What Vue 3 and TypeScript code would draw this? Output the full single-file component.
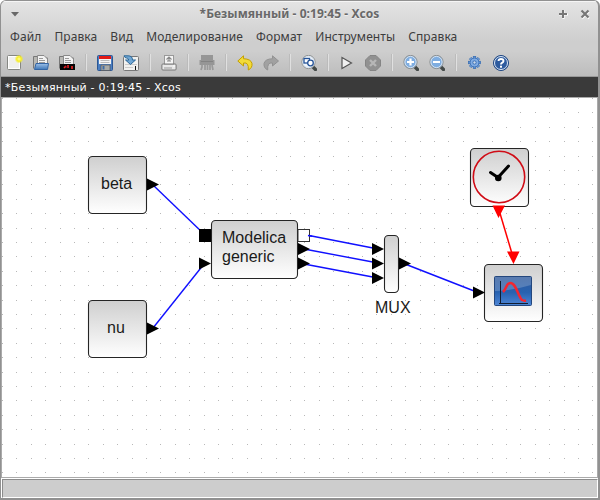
<script setup lang="ts">
interface Point { x: number; y: number }
interface Block { x: number; y: number; w: number; h: number }

const title = '*Безымянный - 0:19:45 - Xcos'
const menus: string[] = ['Файл', 'Правка', 'Вид', 'Моделирование', 'Формат', 'Инструменты', 'Справка']
const tools: string[] = [
  'new', 'open', 'recent', '|', 'save', 'export', '|', 'print', '|', 'delete', '|', 'undo', 'redo', '|',
  'fit', '|', 'play', 'stop', '|', 'zoomin', 'zoomout', '|', 'gear', 'help',
]

const dots: Point[] = []
for (let r = 0; r < 27; r++) {
  for (let c = 0; c < 42; c++) {
    dots.push({ x: Math.round(2 + c * 14.4), y: Math.round(98 + r * 14.4) })
  }
}

const blocks: Block[] = [
  { x: 88.5, y: 156.5, w: 58, h: 57 },
  { x: 88.5, y: 300.5, w: 58, h: 57 },
  { x: 211.5, y: 220.5, w: 86, h: 58 },
  { x: 384.5, y: 235.5, w: 14, h: 57 },
  { x: 470.5, y: 148.5, w: 58, h: 58 },
  { x: 484.5, y: 264.5, w: 58, h: 57 },
]

const links: string[] = [
  'M153 185L205 235', 'M153 328L204 264', 'M309 235.500L378 249', 'M304 249L378 263',
  'M304 264L378 278', 'M405 264L478 292.500',
]

const ports: Point[] = [
  { x: 147, y: 184.5 }, { x: 147, y: 328.5 }, { x: 199, y: 263.5 }, { x: 298, y: 249 }, { x: 298, y: 263.5 },
  { x: 372, y: 249 }, { x: 372, y: 263.5 }, { x: 372, y: 278 }, { x: 399, y: 263.5 }, { x: 473, y: 292.5 },
]
const teeth: number[] = [0, 45, 90, 135, 180, 225, 270, 315]
</script>

<template>
  <div class="window">
    <header class="titlebar">
      <svg class="menu-arrow" width="10" height="6"><path d="M1 1H9L5 5.500Z" fill="#686868" /></svg>
      <span class="title">{{ title }}</span>
      <svg class="controls" width="32" height="12" fill="none" stroke="#777">
        <path d="M0 5.500H9M4.500 1V10" stroke="#fff" stroke-width="2" transform="translate(0 1)" />
        <path d="M0 6H8M4 2V10" stroke-width="2" />
        <path d="M23 3.500L30 10.500M30 3.500L23 10.500" stroke="#fff" stroke-width="2" />
        <path d="M22.500 2.500L29.500 9.500M29.500 2.500L22.500 9.500" stroke-width="2.200" />
      </svg>
    </header>
    <nav class="menubar"><span v-for="m in menus" :key="m">{{ m }}</span></nav>
    <div class="toolbar">
      <template v-for="(t, i) in tools" :key="i">
        <i v-if="t === '|'" class="sep"></i>
        <span v-else class="tool">
          <svg width="16" height="16" viewBox="0 0 16 16">
            <defs>
              <radialGradient id="glow"><stop offset="0" stop-color="#fffda0" /><stop offset=".5" stop-color="#f7ee22" /><stop offset="1" stop-color="#f7ee22" stop-opacity="0" /></radialGradient>
              <linearGradient id="folder" x2="0" y2="1"><stop stop-color="#9dc0e8" /><stop offset="1" stop-color="#3e77b8" /></linearGradient>
            </defs>
            <template v-if="t === 'new'">
              <rect x=".5" y=".5" width="13" height="14" rx="1" fill="#f0f0ee" stroke="#858783" />
              <rect x="1.500" y="1.500" width="11" height="12" fill="none" stroke="#fff" />
              <circle cx="12" cy="4" r="4.500" fill="url(#glow)" />
            </template>
            <template v-else-if="t === 'open' || t === 'recent'">
              <path d="M.5 13.500V1.500H5.500L6.500 3H14.500V10" fill="#b8b8b4" stroke="#777" />
              <path d="M4.500 10V.5H11L14.500 4V10Z" fill="#f3f3f3" stroke="#8a8a8a" />
              <path d="M6 3.500H10M6 5.500H12M6 7.500H12" stroke="#999" />
              <path v-if="t === 'open'" d="M3 8.500H15.500L14.500 14.500H1.500Z" fill="url(#folder)" stroke="#3465a4" />
              <g v-else><rect x="1" y="9" width="15" height="6" fill="#050505" /><path d="M5 13L7 11M9 10V13M13 11V14" stroke="#f22" stroke-width="1.500" /><path d="M6 12H9" stroke="#8c1720" /></g>
            </template>
            <template v-else-if="t === 'save'">
              <rect x=".5" y=".5" width="15" height="15" rx="1" fill="#4b7fc2" stroke="#2c5794" />
              <rect x="2" y="1" width="12" height="8" fill="#f3f3f3" />
              <rect x="2" y="1" width="12" height="3" fill="#e31b17" />
              <path d="M3.500 5.500H12.500M3.500 7.500H12.500" stroke="#bbb" />
              <rect x="4" y="10" width="9" height="5.500" fill="#a8aaa6" stroke="#555" stroke-width=".7" />
              <rect x="5.500" y="11" width="2" height="3.500" fill="#426ca1" />
            </template>
            <template v-else-if="t === 'export'">
              <rect x=".5" y="1.500" width="15" height="14" rx="1" fill="#f1f1ef" stroke="#777" />
              <path d="M2 9.500H14M2 12.500H10" stroke="#ccc" /><path d="M12.500 11V15" stroke="#111" />
              <path d="M1 .8H5Q9.500 .8 9.500 5H12.500L7.500 9.500L2.500 5H5.800Q5.800 3 2 2.500Z" fill="#70a6d3" stroke="#2d6899" />
            </template>
            <template v-else-if="t === 'print'">
              <rect x="3.500" y=".5" width="9" height="9" fill="#f5f5f5" stroke="#999" />
              <path d="M8 2V6M5.500 4.500L8 2L10.500 4.500M6 6H10" fill="none" stroke="#888" stroke-width="1.200" />
              <rect x=".9" y="9" width="14.200" height="6" rx="1" fill="#e8e8e8" stroke="#777" />
              <path d="M3 9.500H13M3 13H11" stroke="#999" /><path d="M12 11H14" stroke="#fff" />
            </template>
            <template v-else-if="t === 'delete'">
              <path d="M2 0H14V5H15.500V10H.5V5H2Z" fill="#969696" /><path d="M2 6.500H14" stroke="#838383" />
              <path d="M3 10V12L2 15M6 10V15M8.500 10V15M11 10V15M13 10L14 15" fill="none" stroke="#999" stroke-width="1.700" />
            </template>
            <path v-else-if="t === 'undo'" d="M6.500 .8L.8 6L6.500 11V8Q12 7 11.300 15Q15.500 13 15 8.500Q14 4 6.500 3.700Z" fill="#f3db38" stroke="#c4a000" />
            <path v-else-if="t === 'redo'" d="M9.500 .8L15.500 6L9.500 11V8Q4 7 4.700 15Q.5 13 1 8.500Q2 4 9.500 3.700Z" fill="#a1a1a1" stroke="#929292" />
            <template v-else-if="t === 'fit' || t === 'zoomin' || t === 'zoomout'">
              <path d="M11.500 11.500L14.500 14.500" stroke="#444a48" stroke-width="3.300" stroke-linecap="round" />
              <circle cx="7.500" cy="7" r="6.600" :fill="t === 'fit' ? '#edf3fa' : '#7fade0'" stroke="#8b8e8e" />
              <circle cx="7.500" cy="7" r="5.600" fill="none" stroke="#d8e4f1" />
              <g v-if="t === 'fit'" fill="#fff" stroke="#265498" stroke-width="1.300"><rect x="3" y="3.500" width="5.500" height="4.500" /><circle cx="9.500" cy="8" r="2.800" /></g>
              <path v-else-if="t === 'zoomin'" d="M4 7H11M7.500 3.500V10.500" stroke="#fff" stroke-width="2.200" />
              <path v-else d="M4 7H11" stroke="#fff" stroke-width="2.200" />
            </template>
            <path v-else-if="t === 'play'" d="M3 2.500L12.500 8L3 13.500Z" fill="#f0f0f0" stroke="#555" stroke-width="1.200" />
            <template v-else-if="t === 'stop'">
              <path d="M5 .5H11L15.500 5V11L11 15.500H5L.5 11V5Z" fill="#919191" stroke="#858585" />
              <path d="M5 5L11 11M11 5L5 11" stroke="#b7b7b7" stroke-width="2.400" />
            </template>
            <g v-else-if="t === 'gear'">
              <rect v-for="a in teeth" :key="a" x="6.300" y="1.500" width="2.400" height="3" :transform="`rotate(${a} 7.500 7.500)`" fill="#76a4df" stroke="#3b70b5" stroke-width=".8" />
              <circle cx="7.500" cy="7.500" r="4.500" fill="#80abe3" stroke="#3b70b5" /><circle cx="7.500" cy="7.500" r="1.700" fill="#ccd9e9" stroke="#3b70b5" />
            </g>
            <template v-else-if="t === 'help'">
              <circle cx="8" cy="8" r="7.500" fill="#2d5b9f" stroke="#1f4783" /><circle cx="8" cy="8" r="6.500" fill="none" stroke="#dce6f3" />
              <path d="M5.500 6Q5.700 4 8 4Q10.500 4 10.500 6Q10.500 7 9 7.800Q8 8.400 8 9.500" fill="none" stroke="#fff" stroke-width="1.900" /><rect x="7" y="10.700" width="2" height="2" fill="#fff" />
            </template>
          </svg>
        </span>
      </template>
    </div>
    <div class="tab"><span>{{ title }}</span></div>
    <main class="canvas">
      <svg width="596" height="379" viewBox="2 98 596 379">
        <defs>
          <linearGradient id="block" x2="0" y2="1"><stop stop-color="#cfcfcf" /><stop offset="1" stop-color="#fff" /></linearGradient>
          <linearGradient id="screen" x2="0" y2="1"><stop stop-color="#315b9c" /><stop offset=".55" stop-color="#2862b0" /><stop offset="1" stop-color="#4d86d6" /></linearGradient>
        </defs>
        <rect v-for="(d, i) in dots" :key="i" :x="d.x" :y="d.y" width="1" height="1" fill="#b8b8b8" />
        <rect v-for="(b, i) in blocks" :key="'b' + i" :x="b.x" :y="b.y" :width="b.w" :height="b.h" rx="4" fill="url(#block)" stroke="#252525" stroke-width="1.100" />
        <path v-for="l in links" :key="l" :d="l" stroke="#1010ff" stroke-width="1.400" />
        <path v-for="(p, i) in ports" :key="'p' + i" :d="`M${p.x} ${p.y - 6}L${p.x + 12} ${p.y}L${p.x} ${p.y + 6}Z`" fill="#000" />
        <rect x="199" y="229" width="12" height="13" />
        <rect x="298" y="229.500" width="11.500" height="12" fill="#fff" stroke="#333" />
        <path d="M308 235.500L312 236.300" stroke="#1010ff" stroke-width="1.400" />
        <path d="M499 210L513 257" stroke="red" stroke-width="1.500" />
        <path d="M492.500 205.500H505L498.500 218ZM507 251.500H519.500L513.500 264Z" fill="red" />
        <g class="label">
          <text x="101" y="189">beta</text>
          <text x="107" y="333">nu</text>
          <text x="222" y="243">Modelica</text>
          <text x="222" y="262">generic</text>
          <text x="375" y="313">MUX</text>
        </g>
        <circle cx="499" cy="177" r="25.700" fill="none" stroke="#d00c16" stroke-width="1.600" />
        <path d="M490.500 172.500L498 177.500L508.500 166" fill="none" stroke="#000" stroke-width="3" stroke-linecap="round" />
        <circle cx="498.300" cy="178" r="3.300" />
        <rect x="494.500" y="276.500" width="37" height="29" rx="1" fill="url(#screen)" stroke="#24477d" />
        <path d="M495 277H531V285Q511 291 495 291Z" fill="#fff" opacity=".2" />
        <path d="M500.500 281V304M499 303.500H528" stroke="#101c30" />
        <path d="M503 292C507 288 506 283 510.500 283C516 283 518 296 522 300Q524 301 526 300.500" fill="none" stroke="#f22630" stroke-width="2.500" />
      </svg>
    </main>
    <footer class="status"></footer>
  </div>
</template>

<style>
body { margin: 0; background: #fff; }
</style>

<style scoped>
.window { box-sizing: border-box; width: 600px; height: 500px; display: flex; flex-direction: column; border: 1px solid #919191; border-right-width: 2px; border-bottom-width: 2px; border-radius: 6px 6px 0 0; overflow: hidden; background: linear-gradient(#e4e4e4, #cecece 40px, #cecece 50px, #bcbcbc 76px, #ddd 77px); }
.titlebar { box-sizing: border-box; height: 24px; border-top: 1px solid #f5f5f5; display: flex; align-items: center; padding: 0 7px 0 9px; font: bold 12px "Noto Sans", sans-serif; letter-spacing: .06px; color: #686868; text-shadow: 0 1px #eee; }
.title { flex: 1; text-align: center; white-space: nowrap; }
.controls { display: block; }
.menubar { height: 22px; display: flex; align-items: center; gap: 13px; padding-left: 9px; font: 12px "Noto Sans", sans-serif; letter-spacing: .1px; color: #3c3c3c; white-space: nowrap; }
.toolbar { box-sizing: border-box; height: 30px; display: flex; align-items: center; padding-left: 1px; padding-top: 2px; border-bottom: 1px solid #999; }
.tool { width: 26px; height: 16px; display: flex; justify-content: center; }
.sep { box-sizing: border-box; width: 12px; height: 17px; padding: 0 5px; }
.sep::before { content: ""; display: block; width: 1px; height: 17px; background: #bbb; border-right: 1px solid #e0e0e0; }
.tab { box-sizing: border-box; height: 20px; background: #3a3a3a; color: #fff; font: 11px/20px "DejaVu Sans", sans-serif; letter-spacing: .22px; padding: 1px 0 0 4px; white-space: nowrap; }
.canvas { box-sizing: border-box; height: 381px; border: 1px solid #aaa; background: #fff; overflow: hidden; }
.canvas svg { display: block; }
.label { font: 16px "Liberation Sans", sans-serif; fill: #1a1a1a; }
.status { flex: 1; border: 1px solid #8c8c8c; border-right-color: #fff; border-bottom-color: #fff; background: #cdcdcd; margin: 1px 0 0 1px; outline: 1px solid #fff; }
</style>
